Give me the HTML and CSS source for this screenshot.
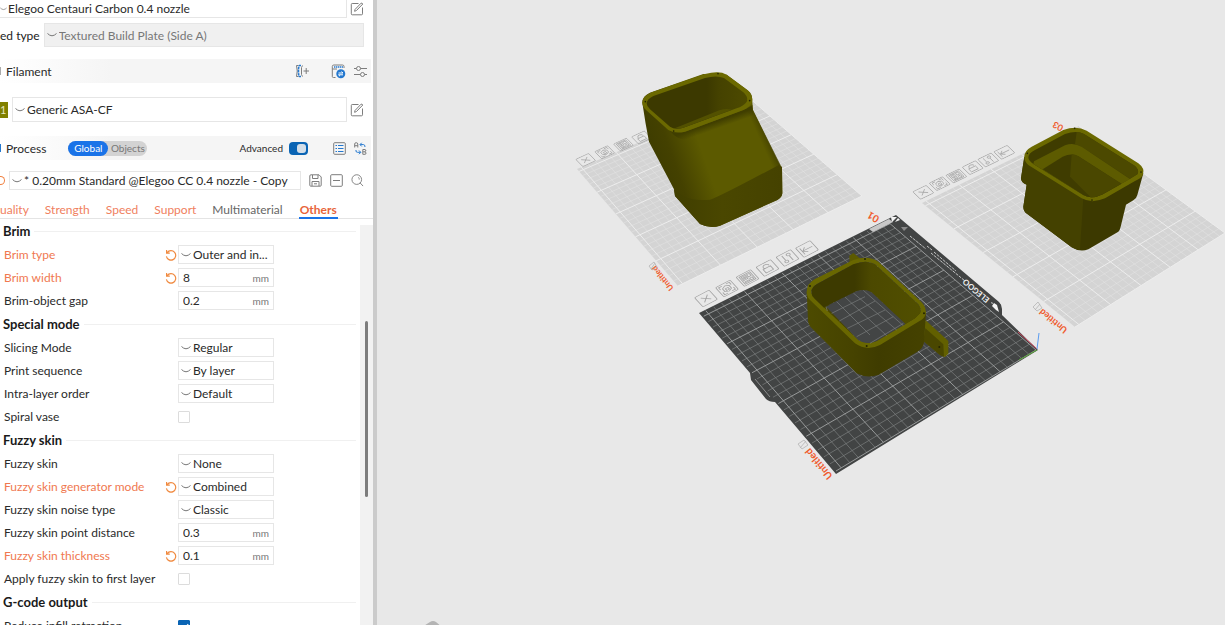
FILE: index.html
```html
<!DOCTYPE html>
<html lang="en">
<head>
<meta charset="utf-8">
<title>Slicer - Prepare</title>
<link rel="stylesheet" href="styles.css">
</head>
<body>
<svg class="defs" aria-hidden="true">
  <symbol id="chev" viewBox="0 0 10 6"><path d="M.5 1.500Q2.500 3.600 5 3.800 7.500 3.600 9.500 1.500"/></symbol>
  <symbol id="edit" viewBox="0 0 14 14"><path d="M8.500 1.500H2.200Q1.300 1.500 1.300 2.500V11.800Q1.300 12.800 2.200 12.800H11.500Q12.500 12.800 12.500 11.800V5.500M5 7.500 11 1.200Q12 .700 12.800 2L6.500 8.500 4.600 9.300Z"/></symbol>
  <symbol id="undo" viewBox="0 0 12 12"><path d="M2.200 3.600A4.700 4.700 0 1 1 1.400 7.400M1.600.9V4.100H4.800"/></symbol>

  <symbol id="p-close" viewBox="-12 -12 24 24"><rect x="-11" y="-11" width="22" height="22" rx="2"/><path d="M-5-5 5 5M5-5-5 5"/></symbol>
  <symbol id="p-orient" viewBox="-12 -12 24 24"><rect x="-11" y="-11" width="22" height="22" rx="2"/><path d="M-8-3V-8H-3M3-8H8V-3M8 3V8H3M-3 8H-8V3M0-6 5-3V3L0 6-5 3V-3ZM-2-1H2V3H-2Z"/></symbol>
  <symbol id="p-arrange" viewBox="-12 -12 24 24"><rect x="-11" y="-11" width="22" height="22" rx="2"/><path d="M-8-8H8V8H-8ZM-6-6H0V1H-6ZM2-6H6V-1H2ZM2 2H6V6H2ZM-6 4H0V6H-6ZM-4-4H-2V-1H-4Z"/></symbol>
  <symbol id="p-lock" viewBox="-12 -12 24 24"><rect x="-11" y="-11" width="22" height="22" rx="2"/><path d="M-6 7V-1H5V7ZM-4-1V-4Q-3-8 1-7 5-6 4-3"/></symbol>
  <symbol id="p-set" viewBox="-12 -12 24 24"><rect x="-11" y="-11" width="22" height="22" rx="2"/><path d="M-4-8V2M4-2V8"/><circle cx="-4" cy="5" r="2.500"/><circle cx="4" cy="-5" r="2.500"/></symbol>
  <symbol id="p-move" viewBox="-12 -12 24 24"><rect x="-11" y="-11" width="22" height="22" rx="2"/><path d="M-7-7V7M8 0H-6M-1-5-6 0-1 5"/></symbol>
</svg>

<main class="app">
  <aside class="sidebar">
    <div class="row printer">
      <div class="combo grow"><svg class="chev"><use href="#chev"/></svg><select aria-label="Printer"><option>Elegoo Centauri Carbon 0.4 nozzle</option></select></div>
      <button class="icon" aria-label="Edit printer"><svg width="14" height="14"><use href="#edit"/></svg></button>
    </div>
    <div class="row bed">
      <label for="bed">ed type</label>
      <div class="combo grow off"><svg class="chev"><use href="#chev"/></svg><select id="bed"><option>Textured Build Plate (Side A)</option></select></div>
    </div>

    <header class="bar filament-bar">
      <i class="tick"></i><h2>Filament</h2>
      <span class="push"></span>
      <button class="icon add" aria-label="Add filament"><svg width="14" height="14" viewBox="0 0 14 14"><path d="M3.500 1.500H1.500Q3 7 1.500 12.500H3.500M8.500 7H14M11.200 4V10M7.500 1.500 6.500 3.500V10.500L7.500 12.500"/><path class="blue" d="M6 1.500H4.500Q3.500 2 3.500 7T4.500 12.500H6" stroke-width="1.500" stroke-dasharray="2.500 .5"/></svg></button>
      <button class="icon" aria-label="Sync filament"><svg width="15" height="15" viewBox="0 0 15 15"><path d="M4.500 13.500H2.500Q1.300 13.500 1.300 12.500V2.500Q1.300 1 2.800 1H11.500Q13 1 13 2.500V4M1.300 5H6"/><path class="blue" d="M3 3H12" stroke-width="1.600" stroke-dasharray="1.400 .6"/><circle class="fill" cx="9.800" cy="9.800" r="4.500"/><path class="white" d="M7.500 9H12L10.500 7.600M12 10.800H7.500L9 12.200"/></svg></button>
      <button class="icon" aria-label="Filament settings"><svg width="13" height="13" viewBox="0 0 13 13"><path d="M0 3.500H2.500M6.500 3.500H13M0 9.500H6.500M10.500 9.500H13"/><circle cx="4.500" cy="3.500" r="2"/><circle cx="8.500" cy="9.500" r="2"/></svg></button>
    </header>
    <div class="row filament">
      <span class="swatch">1</span>
      <div class="combo grow"><svg class="chev"><use href="#chev"/></svg><select aria-label="Filament"><option>Generic ASA-CF</option></select></div>
      <button class="icon" aria-label="Edit filament"><svg width="14" height="14"><use href="#edit"/></svg></button>
    </div>

    <header class="bar">
      <i class="tick blue-tick"></i><h2>Process</h2>
      <div class="pill"><button class="on">Global</button><button>Objects</button></div>
      <span class="push"></span>
      <label class="adv" for="adv">Advanced</label><input class="switch" type="checkbox" id="adv" checked>
      <button class="icon" aria-label="Parameter list"><svg width="13" height="13" viewBox="0 0 13 13"><rect x=".7" y=".7" width="11.600" height="11.600" rx="1"/><path class="blue" d="M2.500 3.500H4M5 3.500H10.500M2.500 6.500H4M5 6.500H10.500M2.500 9.500H4M5 9.500H10.500"/></svg></button>
      <button class="icon" aria-label="Compare presets"><svg width="13" height="13" viewBox="0 0 13 13"><path d="M.7 5.500V2Q.7.7 2.200.7T3.800 2V5.500M.7 3.700H3.800M8.800 7.500H11Q12.200 7.800 11.800 9L10.800 9.800 12 10.600Q12.300 12.300 11 12.300H8.800ZM8.800 9.800H11"/><path class="blue" d="M7.700.8 6 2.600 7.700 4.400M6.200 2.600H9.500Q11 2.600 11 5M2 8V9Q2 10.300 3.500 10.300H6.500M5 8.500 6.800 10.300 5 12.200"/></svg></button>
    </header>
    <div class="row preset">
      <i class="arc"></i>
      <div class="combo grow"><svg class="chev"><use href="#chev"/></svg><select aria-label="Process preset"><option>* 0.20mm Standard @Elegoo CC 0.4 nozzle - Copy</option></select></div>
      <button class="icon" aria-label="Save"><svg width="13" height="13" viewBox="0 0 13 13"><path d="M.8 2V11.200Q.8 12.200 1.800 12.200H11.200Q12.200 12.200 12.200 11.200V3L10 .8H2Q.8.8.8 2ZM3.500 1V4.500H9V1M3 12V7.500H10V12M5 9.800H8"/></svg></button>
      <button class="icon" aria-label="Remove"><svg width="13" height="13" viewBox="0 0 13 13"><rect x=".7" y=".7" width="11.600" height="11.600" rx="1"/><path d="M3 6.500H10"/></svg></button>
      <button class="icon" aria-label="Search"><svg width="13" height="13" viewBox="0 0 14 14"><circle cx="6.200" cy="6" r="5.200"/><path d="M9.700 9.500 13 13M8 3.600Q9 4.600 8.900 6"/></svg></button>
    </div>

    <nav class="tabs">
      <a href="#quality">uality</a><a href="#strength">Strength</a><a href="#speed">Speed</a><a href="#support">Support</a><a class="plain" href="#multi">Multimaterial</a><a class="current" href="#others">Others</a>
    </nav>

    <div class="scroll">
      <form class="params">
        <h3>Brim</h3>
        <div class="param mod"><label for="f1">Brim type</label><svg class="undo"><use href="#undo"/></svg><div class="combo"><svg class="chev"><use href="#chev"/></svg><select id="f1"><option>Outer and in...</option></select></div></div>
        <div class="param mod"><label for="f2">Brim width</label><svg class="undo"><use href="#undo"/></svg><div class="num"><input id="f2" value="8"><span>mm</span></div></div>
        <div class="param"><label for="f3">Brim-object gap</label><div class="num"><input id="f3" value="0.2"><span>mm</span></div></div>
        <h3>Special mode</h3>
        <div class="param"><label for="f4">Slicing Mode</label><div class="combo"><svg class="chev"><use href="#chev"/></svg><select id="f4"><option>Regular</option></select></div></div>
        <div class="param"><label for="f5">Print sequence</label><div class="combo"><svg class="chev"><use href="#chev"/></svg><select id="f5"><option>By layer</option></select></div></div>
        <div class="param"><label for="f6">Intra-layer order</label><div class="combo"><svg class="chev"><use href="#chev"/></svg><select id="f6"><option>Default</option></select></div></div>
        <div class="param"><label for="f7">Spiral vase</label><input class="check" type="checkbox" id="f7"></div>
        <h3>Fuzzy skin</h3>
        <div class="param"><label for="f8">Fuzzy skin</label><div class="combo"><svg class="chev"><use href="#chev"/></svg><select id="f8"><option>None</option></select></div></div>
        <div class="param mod"><label for="f9">Fuzzy skin generator mode</label><svg class="undo"><use href="#undo"/></svg><div class="combo"><svg class="chev"><use href="#chev"/></svg><select id="f9"><option>Combined</option></select></div></div>
        <div class="param"><label for="f10">Fuzzy skin noise type</label><div class="combo"><svg class="chev"><use href="#chev"/></svg><select id="f10"><option>Classic</option></select></div></div>
        <div class="param"><label for="f11">Fuzzy skin point distance</label><div class="num"><input id="f11" value="0.3"><span>mm</span></div></div>
        <div class="param mod"><label for="f12">Fuzzy skin thickness</label><svg class="undo"><use href="#undo"/></svg><div class="num"><input id="f12" value="0.1"><span>mm</span></div></div>
        <div class="param"><label for="f13">Apply fuzzy skin to first layer</label><input class="check" type="checkbox" id="f13"></div>
        <h3>G-code output</h3>
        <div class="param"><label for="f14">Reduce infill retraction</label><input class="check" type="checkbox" id="f14" checked></div>
      </form>
      <div class="track"><i class="thumb"></i></div>
    </div>
  </aside>

  <section class="view" aria-label="3D view">
    <svg class="scene" viewBox="377 0 848 625" preserveAspectRatio="xMidYMid slice">
      <defs>
        <linearGradient id="a-front" gradientUnits="userSpaceOnUse" x1="270" y1="330" x2="400" y2="285"><stop offset="0" stop-color="#3f3d00"/><stop offset=".35" stop-color="#444100"/><stop offset="1" stop-color="#5c5a00"/></linearGradient>
        <linearGradient id="a-low" x1="0" x2="1"><stop offset="0" stop-color="#403e00"/><stop offset=".45" stop-color="#4a4700"/><stop offset="1" stop-color="#454200"/></linearGradient>
        <linearGradient id="a-edge" gradientUnits="userSpaceOnUse" x1="570" y1="240" x2="596" y2="228"><stop offset="0" stop-color="#464300" stop-opacity="0"/><stop offset="1" stop-color="#424000"/></linearGradient>
        <linearGradient id="a-top" gradientUnits="userSpaceOnUse" x1="440" y1="184" x2="447" y2="204"><stop offset="0" stop-color="#403e00"/><stop offset="1" stop-color="#403e00" stop-opacity="0"/></linearGradient>
        <linearGradient id="a-in" x1="0" x2="1"><stop offset="0" stop-color="#3c3900"/><stop offset=".6" stop-color="#3c3900"/><stop offset=".72" stop-color="#454200"/><stop offset="1" stop-color="#4d4a00"/></linearGradient>
        <linearGradient id="b-out" gradientUnits="userSpaceOnUse" x1="350" y1="0" x2="708" y2="0"><stop offset="0" stop-color="#4d4b00"/><stop offset=".38" stop-color="#464300"/><stop offset=".6" stop-color="#3f3c00"/><stop offset="1" stop-color="#454200"/></linearGradient>
        <linearGradient id="b-in" gradientUnits="userSpaceOnUse" x1="364" y1="0" x2="690" y2="0"><stop offset="0" stop-color="#3d3a00"/><stop offset=".4" stop-color="#3d3a00"/><stop offset=".55" stop-color="#4c4900"/><stop offset="1" stop-color="#514f00"/></linearGradient>
      </defs>

      <g class="plate-light">
        <path d="M577 169 747 96 862 196 678 286Z"/>
        <path class="grid" data-quad="862,196 678,286 577,169 747,96"/>
        <path d="M922 203 1079 126 1225 233 1075 327Z"/>
        <path class="grid" data-quad="1225,233 1075,327 922,203 1079,126"/>
      </g>

      <g class="plate-dark">
        <path d="M699 313 896 215 999 302Q1002 305 1002 309L1002 315 1038 350 836 474 775 402Q769 402 766 399L751 380 750 373Z"/>
        <path class="lip" d="M755 379 770 397"/>
        <path class="grid" data-quad="1036,350 836,471 701,313 887,221"/>
        <path class="edge" d="M896 217 1001 305 1001 315 906 236 889 222Z"/>
        <path class="mark" d="M869 229 889 219 893 222 873 232Z"/>
        <path class="badge" d="M891 217 897 217 892 222ZM898 218 900 220 895 222Z"/>
        <path class="tri" d="M901 227 908 227 904 231Z"/>
        <path class="print" d="M910 236 926 249M927 246 932 250M934 252 956 271M931 253 965 281" stroke-dasharray="3 1"/>
        <path class="badge" d="M994 303 997 305 999 312 996 310 992 306ZM991 303 992 302 993 304Z"/>
        <text class="brand" transform="translate(990 299) rotate(-140)">ELEGOO</text>
      </g>

      <g class="names">
        <text transform="translate(833 476) rotate(-129)" class="big">Untitled</text>
        <text transform="translate(674 288) rotate(-129)">Untitled</text>
        <text transform="translate(1068 329) rotate(-141)" class="mid">Untitled</text>
        <text transform="translate(880 217) rotate(-150)" class="big">01</text>
        <text transform="translate(1064 126) rotate(-152)" class="mid">03</text>
      </g>
      <g class="pens">
        <path d="M798 444 804 440 808 445 802 449ZM800 448 806 441M649 266 654 262 657 267 652 270ZM651 269 655 263M1033 307 1038 302 1042 308 1037 311ZM1035 310 1040 304"/>
      </g>

      <g class="plate-icons">
        <use href="#p-close" x="-13" y="-13" width="26" height="26" transform="matrix(.61 -.32 .36 .39 706 298.500)"/>
        <use href="#p-orient" x="-13" y="-13" width="26" height="26" transform="matrix(.61 -.32 .36 .39 727 288.500)"/>
        <use href="#p-arrange" x="-13" y="-13" width="26" height="26" transform="matrix(.61 -.32 .36 .39 747.500 278)"/>
        <use href="#p-lock" x="-13" y="-13" width="26" height="26" transform="matrix(.61 -.32 .36 .39 767.500 268)"/>
        <use href="#p-set" x="-13" y="-13" width="26" height="26" transform="matrix(.61 -.32 .36 .39 787.500 258)"/>
        <use href="#p-move" x="-13" y="-13" width="26" height="26" transform="matrix(.61 -.32 .36 .39 807 249)"/>
        <use href="#p-close" x="-13" y="-13" width="26" height="26" transform="matrix(.54 -.25 .3 .31 585.700 160)"/>
        <use href="#p-orient" x="-13" y="-13" width="26" height="26" transform="matrix(.54 -.25 .3 .31 604.700 152.300)"/>
        <use href="#p-arrange" x="-13" y="-13" width="26" height="26" transform="matrix(.54 -.25 .3 .31 623.500 144.700)"/>
        <use href="#p-lock" x="-13" y="-13" width="26" height="26" transform="matrix(.54 -.25 .3 .31 641.500 137.500)"/>
        <use href="#p-close" x="-13" y="-13" width="26" height="26" transform="matrix(.56 -.27 .33 .32 923.300 192.300)"/>
        <use href="#p-orient" x="-13" y="-13" width="26" height="26" transform="matrix(.56 -.27 .33 .32 939.700 183.700)"/>
        <use href="#p-arrange" x="-13" y="-13" width="26" height="26" transform="matrix(.56 -.27 .33 .32 956.300 176)"/>
        <use href="#p-lock" x="-13" y="-13" width="26" height="26" transform="matrix(.56 -.27 .33 .32 972.700 167.700)"/>
        <use href="#p-set" x="-13" y="-13" width="26" height="26" transform="matrix(.56 -.27 .33 .32 988.300 160)"/>
        <use href="#p-move" x="-13" y="-13" width="26" height="26" transform="matrix(.56 -.27 .33 .32 1004.300 152.300)"/>
      </g>

      <g class="axes"><path class="ax-x" d="M1037 349 1018 332"/><path class="ax-y" d="M1037 350 1019 360"/><path class="ax-z" d="M1037 349 1039 333"/></g>

      <!-- angled tub -->
      <g transform="translate(570 60) scale(.33333)">
        <path fill="url(#a-front)" d="M217 128Q216 110 240 98L400 42 470 44 535 92Q548 102 547 125L549 150 628 312 636 322 637 400Q636 412 622 420L450 497Q420 507 390 492L315 408 312 388 237 245Q226 190 217 128Z"/>
        <path fill="url(#a-low)" d="M312 388 340 408Q370 424 420 419 440 415 628 314L636 322 637 400Q636 412 622 420L450 497Q420 507 390 492L315 408Z"/>
        <path fill="url(#a-edge)" d="M520 150 547 135 549 150 632 316 606 327Z"/>
        <path fill="url(#a-top)" d="M300 212Q320 240 355 240L552 168 545 138 520 150 345 215Z"/>
        <path fill="#6b6900" d="M217 128Q217 108 245 97L405 42Q448 31 470 44L532 90Q550 106 546 125 542 140 520 150L345 215Q315 222 295 210L228 150Q217 140 217 128Z"/>
        <path fill="url(#a-in)" d="M230 130Q230 118 250 108L405 54Q440 45 462 54L522 98Q538 115 528 128 520 138 500 145L340 203Q315 211 300 200L240 148Q230 140 230 130Z"/>
        <path fill="#535100" d="M314 205 450 150Q470 144 486 149L340 203Q328 207 314 205Z"/>
        <g fill="#242400"><circle cx="226" cy="125" r="2.500"/><circle cx="444" cy="41" r="2.500"/><circle cx="539" cy="122" r="2.500"/><circle cx="311" cy="213" r="2.500"/></g>
      </g>

      <!-- open ring with clips -->
      <g transform="translate(690 205) scale(.33333)">
        <path fill="#5c5a00" d="M478 152 490 144 515 164 480 190Z"/>
        <path fill="#626000" d="M706 345 775 408 775 446 765 456 750 450 700 408Z"/>
        <path fill="#4a4700" d="M706 370 760 418 762 456 750 450 700 408Z"/>
        <path fill="url(#b-out)" fill-rule="evenodd" d="M350 260 354 345Q354 358 364 368L500 505Q530 521 565 510L682 440Q700 430 702 412L708 322 565 300 540 420 500 405 420 300Z"/>
        <path fill="#696700" fill-rule="evenodd" d="M350 262Q350 235 375 222L490 165Q535 150 565 170L695 292Q712 310 706 330 702 342 685 350L570 420Q530 440 495 415L360 285Q350 275 350 262ZM364 262Q364 272 375 282L505 405Q530 422 560 408L675 340 690 325Q697 315 685 298L555 178Q530 162 490 178L385 235Q364 245 364 262Z"/>
        <path class="plate-floor" d="M408 305 500 258Q525 250 545 262L648 356 560 408Q530 422 505 405Z"/>
        <path class="floor-lines" d="M408 305 412 318M440 290 540 390M465 276 590 392M490 264 620 375M520 256 640 362M425 325 525 275M448 348 555 288M472 370 585 315M500 395 610 335M540 415 640 355"/>
        <path fill="url(#b-in)" fill-rule="evenodd" d="M364 262Q364 245 385 235L490 178Q530 162 555 178L685 298Q697 315 690 325L675 340 647 357 545 262Q525 250 500 258L408 304 402 308 375 282Q364 272 364 262Z"/>
        <g fill="#242400"><circle cx="360" cy="243" r="3"/><circle cx="525" cy="162" r="3"/><circle cx="702" cy="325" r="3"/><circle cx="530" cy="423" r="3"/><circle cx="748" cy="426" r="3"/></g>
      </g>

      <!-- stepped box -->
      <g transform="translate(900 110) scale(.33333)">
        <path fill="#3c3900" d="M373 140 363 205Q363 218 380 224L370 290Q370 305 382 312L515 412Q540 428 565 418L655 365Q660 360 662 350L678 284 700 271Q710 265 712 255L730 190Z"/>
        <path fill="#444100" d="M373 140 363 205Q363 218 380 224L370 290Q370 305 382 312L515 412Q530 421 540 420L550 265Z"/>
        <path fill="#6b6900" d="M373 140Q373 122 395 110L490 60Q530 45 560 62L715 160Q735 175 729 193 725 205 705 213L615 265Q575 282 545 265L385 165Q373 155 373 140Z"/>
        <path fill="#3f3c00" d="M385 142Q385 130 405 120L495 72Q530 60 552 72L705 168Q720 182 712 193L695 203 608 253Q575 270 550 255L400 162Q385 152 385 142Z"/>
        <path fill="#4c4900" d="M530 66Q545 67 552 72L705 168Q720 182 712 193L690 206 545 110 525 102Z"/>
        <path fill="#5d5b00" d="M402 154 495 106Q520 97 545 110L690 207 608 253Q575 270 550 255L400 162Z"/>
        <path fill="#3f3c00" d="M428 178 488 140Q515 127 535 139L664 221 608 253Q575 270 550 255Z"/>
        <path fill="#4a4700" d="M515 132Q526 133 535 139L664 221 608 253Q590 262 572 262L510 200Z"/>
        <g fill="#242400"><circle cx="382" cy="130" r="2.500"/><circle cx="524" cy="55" r="2.500"/><circle cx="723" cy="186" r="2.500"/><circle cx="576" cy="270" r="2.500"/></g>
      </g>

      <path class="gizmo" d="M422 627 430 622Q433 620 436 622L442 627Z"/>
    </svg>
  </section>
</main>
<script src="grid.js"></script>
</body>
</html>
```
FILE: grid.js
```js
// Draws the 10 mm build-plate grid inside each perspective quad.
const CELLS = 25.6;

function project([p0, p1, p2, p3]) {
  const dx1 = p1[0] - p2[0], dx2 = p3[0] - p2[0], sx = p0[0] - p1[0] + p2[0] - p3[0];
  const dy1 = p1[1] - p2[1], dy2 = p3[1] - p2[1], sy = p0[1] - p1[1] + p2[1] - p3[1];
  const det = dx1 * dy2 - dx2 * dy1;
  const g = (sx * dy2 - dx2 * sy) / det, h = (dx1 * sy - sx * dy1) / det;
  const a = p1[0] - p0[0] + g * p1[0], b = p3[0] - p0[0] + h * p3[0];
  const d = p1[1] - p0[1] + g * p1[1], e = p3[1] - p0[1] + h * p3[1];
  return (u, v) => {
    const w = g * u + h * v + 1;
    return ((a * u + b * v + p0[0]) / w).toFixed(2) + ' ' + ((d * u + e * v + p0[1]) / w).toFixed(2);
  };
}

document.querySelectorAll('.grid').forEach((path) => {
  const at = project(path.dataset.quad.split(' ').map((p) => p.split(',').map(Number)));
  let thin = '', bold = '';
  for (let i = 0; i <= CELLS; i++) {
    const t = i / CELLS;
    const line = `M${at(t, 0)}L${at(t, 1)}M${at(0, t)}L${at(1, t)}`;
    if (i % 5) thin += line; else bold += line;
  }
  path.setAttribute('d', thin);
  const major = path.cloneNode();
  major.setAttribute('d', bold);
  major.classList.add('major');
  path.after(major);
});
```
FILE: styles.css
```css
* { box-sizing: border-box; }
body { margin: 0; font-family: Lato, "Open Sans", sans-serif; font-size: 12px; color: #2a2a2a; background: #e8e8e8; }
.defs { position: absolute; width: 0; height: 0; }
.app { display: flex; height: 100vh; overflow: hidden; }
.sidebar { flex: none; width: 377px; display: flex; flex-direction: column; background: #fff; border-right: 4px solid #cbcbcb; }
.view { flex: 1; min-width: 0; background: #e8e8e8; }
.scene { display: block; width: 100%; height: 100%; }

button, select, input { font: inherit; color: inherit; margin: 0; padding: 0; border: 0; background: none; outline: 0; }
select { appearance: none; flex: 1; min-width: 0; height: 100%; opacity: 1; }
h2, h3 { margin: 0; font-size: 12px; }
h2 { font-weight: 400; }

.row { flex: none; display: flex; align-items: center; padding-right: 9px; gap: 3px; }
.combo { display: flex; align-items: center; gap: 2px; padding-left: 2px; border: 1px solid #e6e6e6; background: #fff; height: 19px; min-width: 0; }
.grow { flex: 1; }
.chev { flex: none; width: 10px; height: 6px; fill: none; stroke: #777; }
.off { background: #f0f0f0; color: #777; }
.icon { flex: none; display: grid; place-items: center; height: 16px; fill: none; stroke: #7d7d7d; }
.icon svg { display: block; }
.blue { stroke: #2478cf; }
.fill { fill: #2478cf; stroke: none; }
.white { stroke: #fff; }

.printer { height: 18px; }
.printer .combo { border-width: 0 1px 1px 0; height: 18px; padding-left: 0; gap: 1px; }
.printer .chev { width: 7px; }
.bed { height: 24px; margin: 5px 0 12px; color: #222; gap: 4px; }
.bed .combo { height: 24px; }
.filament { height: 25px; margin: 14px 0; }
.filament .combo { height: 25px; margin-left: 1px; }
.swatch { width: 8px; height: 16px; background: #808000; color: #e6e6c0; font-size: 11px; line-height: 16px; overflow: hidden; }

.bar { flex: none; display: flex; align-items: center; gap: 8px; height: 24px; padding-right: 4px; margin-right: 2px; background: linear-gradient(90deg, #fff, #f5f5f5 30%); }
.tick { width: 1px; height: 8px; background: #aaa; margin-right: -3px; }
.blue-tick { background: #2478cf; }
.push { flex: 1; }
.add { margin-right: 14px; }
.pill { display: flex; margin-left: 14px; height: 15px; border-radius: 8px; background: #d3d3d3; color: #777; font-size: 10px; line-height: 15px; }
.pill button { width: 39px; text-align: center; }
.pill .on { width: 40px; background: #1a73e8; color: #fff; border-radius: 8px; }
.adv { font-size: 10px; margin-right: -2px; }
.switch { appearance: none; width: 19px; height: 13px; border-radius: 4px; background: #0a64b4; display: flex; justify-content: flex-end; padding: 2px; margin-right: 17px; }
.switch::after { content: ""; width: 9px; height: 9px; border-radius: 3px; background: #d4dfe9; }

.preset { height: 19px; margin-top: 11px; gap: 8px; }
.preset .combo { margin-left: -4px; }
.arc { width: 5px; height: 9px; border: 1px solid #f08040; border-left: 0; border-radius: 0 5px 5px 0; }

.tabs { flex: none; display: flex; gap: 16px; height: 22px; margin-top: 7px; border-bottom: 1px solid #e4e4e4; }
.tabs a { color: #f08060; text-decoration: none; line-height: 26px; height: 22px; }
.tabs .plain { color: #666; }
.tabs .current { color: #e8653a; font-weight: 700; border-bottom: 2px solid #1a73e8; padding: 0 1px; }

.scroll { flex: 1; min-height: 0; display: flex; overflow: hidden; }
.params { flex: 1; min-width: 0; padding: 0 4px 0 3px; }
.params h3 { display: flex; align-items: center; gap: 4px; height: 24px; color: #1a1a1a; font-size: 13px; }
.params h3::after { content: ""; flex: 1; height: 1px; background: #f0f0f0; }
.param { display: grid; grid-template-columns: 162px 13px 96px; align-items: center; height: 23px; }
.param label { white-space: nowrap; padding-left: 1px; }
.param > :last-child { grid-column: 3; }
.mod label { color: #f07850; }
.undo { width: 12px; height: 12px; fill: none; stroke: #f08a40; stroke-width: 1.2; }
.num { display: flex; align-items: center; height: 19px; border: 1px solid #e6e6e6; padding: 0 4px; }
.num input { flex: 1; min-width: 0; }
.num span { font-size: 10px; color: #777; line-height: 20px; }
.check { appearance: none; width: 12px; height: 12px; border: 1px solid #dcdcdc; border-radius: 1px; }
.check:checked { background: #0a64b4; border-color: #0a64b4; display: grid; place-items: center; }
.check:checked::after { content: ""; width: 7px; height: 4px; border: solid #fff; border-width: 0 0 1px 1px; rotate: -45deg; }
.track { flex: none; width: 13px; margin-top: 6px; background: #f2f2f2; }
.thumb { display: block; width: 3px; height: 176px; margin: 96px 0 0 5px; border-radius: 2px; background: #7d7d7d; }

.plate-light { fill: #d4d4d4; }
.plate-light .grid { fill: none; stroke: #e3e3e3; stroke-width: .6; }
.plate-light .major { stroke: #ededed; stroke-width: 1; }
.plate-dark { fill: #424444; }
.plate-dark .grid { fill: none; stroke: #7d8080; stroke-width: .7; }
.plate-dark .major { stroke: #a0a3a3; stroke-width: .9; }
.lip { stroke: #a0a0a0; stroke-width: .8; }
.edge { fill: #424444; }
.mark { fill: #c8c8c8; }
.badge { fill: #f4f4f4; }
.tri { fill: #888; }
.print { fill: none; stroke: #c4c4c4; stroke-width: 1; }
.brand { fill: #f0f0f0; font-size: 8px; font-weight: 700; }
.names { fill: #f05a2c; font-size: 8px; font-weight: 700; }
.names .mid { font-size: 9px; }
.names .big { font-size: 10px; }
.pens { fill: none; stroke: #b4b4b4; stroke-width: .8; }
.plate-icons { fill: none; stroke: #a4a4a4; stroke-width: 1.3; }
.ax-x { stroke: #d04a60; }
.ax-y { stroke: #58a838; }
.ax-z { stroke: #5a9cf0; }
.plate-floor { fill: #434545; }
.floor-lines { fill: none; stroke: #7b7e7e; stroke-width: 2; }
.gizmo { fill: #b4b4b4; }
```
